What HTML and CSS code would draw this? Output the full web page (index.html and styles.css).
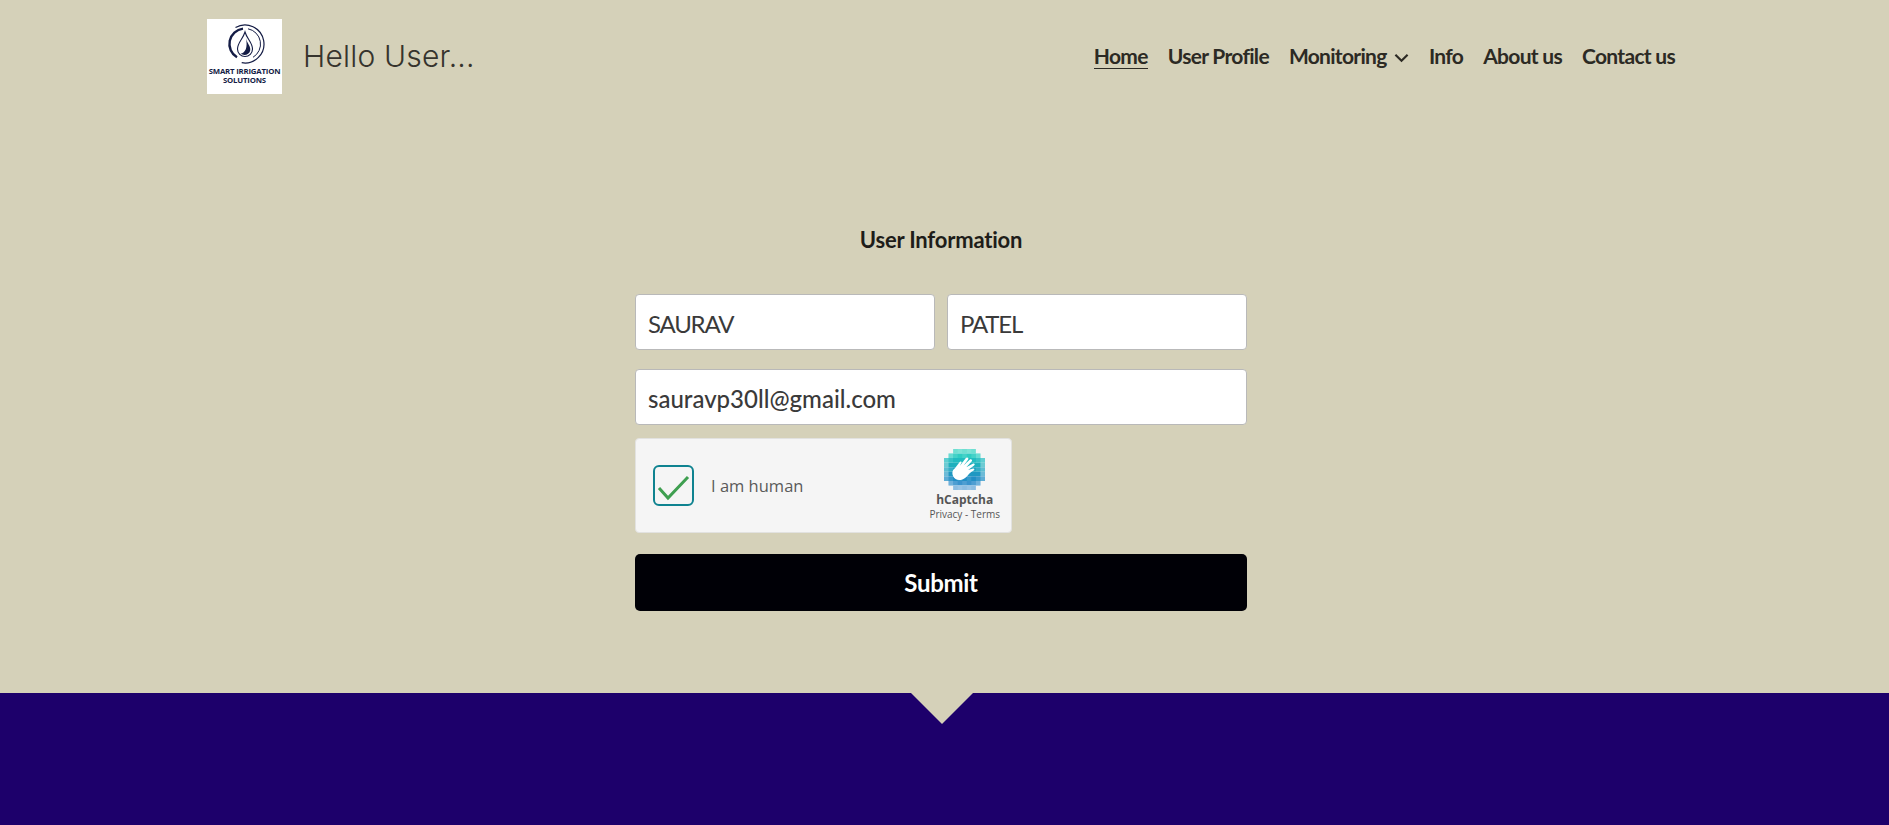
FILE: index.html
```html
<!DOCTYPE html>
<html lang="en">
<head>
    <meta charset="UTF-8">
    <meta name="viewport" content="width=device-width, initial-scale=1.0">
    <title>User Information</title>
    <link rel="stylesheet" href="styles.css">
</head>
<body>
    <header class="site-header">
        <div class="brand">
            <div class="logo">
                <svg class="logo-mark" viewBox="0 0 44 44" width="44" height="44" fill="none">
                    <path d="M12.500 5.500A19 19 0 1 1 18.700 40.700" stroke="#141c45" stroke-width="1.200"/>
                    <path d="M14 35.300A15.500 15.500 0 0 1 20 6.600" stroke="#141c45" stroke-width="2.400"/>
                    <path d="M25 6.800A15.500 15.500 0 0 1 30 35.300" stroke="#141c45" stroke-width="1"/>
                    <path d="M22 10C20 17 14.500 20.500 14.500 27A7.500 7.500 0 0 0 29.500 27C29.500 20.500 24 17 22 10Z" stroke="#141c45" stroke-width="1.100" fill="#fff"/>
                    <path d="M23 16C24 21.500 28 24 27.200 28.500C26.300 33 21 34 17.500 31.800C22.500 30.500 24.800 26 23 16Z" fill="#141c45"/>
                </svg>
                <div class="logo-text">SMART IRRIGATION<br>SOLUTIONS</div>
            </div>
            <h1 class="greeting">Hello User...</h1>
        </div>
        <nav class="main-nav">
            <a href="#" class="active">Home</a>
            <a href="#">User Profile</a>
            <a href="#" class="has-menu">Monitoring
                <svg viewBox="0 0 16 10" width="15" height="10" fill="none"><path d="M1.500 1.500L8 8L14.500 1.500" stroke="#2c2a24" stroke-width="2.300"/></svg>
            </a>
            <a href="#">Info</a>
            <a href="#">About us</a>
            <a href="#">Contact us</a>
        </nav>
    </header>

    <main class="form-section">
        <h2 class="form-title">User Information</h2>
        <form class="user-form">
            <div class="form-row">
                <input type="text" value="SAURAV">
                <input type="text" value="PATEL">
            </div>
            <input type="email" class="email-input" value="sauravp30ll@gmail.com">
            <div class="captcha">
                <div class="captcha-box">
                    <svg viewBox="0 0 41 41" width="41" height="41" fill="none">
                        <rect x="1" y="1" width="39" height="39" rx="5" stroke="#0f8390" stroke-width="2"/>
                        <path d="M6 23L15 33L35 12" stroke="#3f9f50" stroke-width="3"/>
                    </svg>
                    <span class="captcha-label">I am human</span>
                </div>
                <div class="captcha-brand">
                    <svg class="captcha-logo" viewBox="0 0 9 9" width="41" height="41">
                        <path d="M2 0H7V1H2Z" fill="#6fdfd2"/>
                        <path d="M1 1H8V2H1Z" fill="#2fcdc2"/>
                        <path d="M0 2H9V3H0Z" fill="#22bcc0"/>
                        <path d="M0 3H9V4H0Z" fill="#1fb0bd"/>
                        <path d="M0 4H9V5H0Z" fill="#1fa5c0"/>
                        <path d="M0 5H9V6H0Z" fill="#1f98c2"/>
                        <path d="M0 6H9V7H0Z" fill="#218ec5"/>
                        <path d="M1 7H8V8H1Z" fill="#3a93cd"/>
                        <path d="M2 8H7V9H2Z" fill="#8cbde2"/>
                        <path d="M0 2H1V7H0ZM8 2H9V7H8ZM1 1H2V2H1ZM7 1H8V2H7ZM1 7H2V8H1ZM7 7H8V8H7Z" fill="#fff" opacity=".28"/>
                        <path d="M3 0H4V1H3ZM5 0H6V1H5ZM2 1H3V2H2ZM4 1H5V2H4ZM6 1H7V2H6ZM1 2H2V3H1ZM7 2H8V3H7ZM0 3H1V4H0ZM8 3H9V4H8ZM1 4H2V5H1ZM7 4H8V5H7ZM0 5H1V6H0ZM8 5H9V6H8ZM1 6H2V7H1ZM3 6H4V7H3ZM5 6H6V7H5ZM7 6H8V7H7ZM2 7H3V8H2ZM4 7H5V8H4ZM6 7H7V8H6ZM3 8H4V9H3ZM5 8H6V9H5Z" fill="#fff" opacity=".1"/>
                        <path d="M2 6C1.700 5.200 1.800 4.600 2.400 4.200L3.400 2.900C3.600 2.600 4 2.800 3.800 3.100L3.500 3.700L4.800 2C5.100 1.700 5.500 2 5.300 2.300L4.300 3.600L5.700 2.300C6 2.100 6.300 2.400 6.100 2.700L4.900 4L6.400 3.200C6.700 3.100 6.900 3.400 6.600 3.600L5.300 4.600L6.400 4.300C6.700 4.300 6.800 4.600 6.500 4.700C5.700 5 5.300 5.800 4.700 6.300C3.700 7.100 2.400 6.900 2 6Z" fill="#fff"/>
                    </svg>
                    <div class="captcha-name">hCaptcha</div>
                    <div class="captcha-links">Privacy - Terms</div>
                </div>
            </div>
            <button type="submit" class="submit-btn">Submit</button>
        </form>
    </main>

    <footer class="site-footer">
        <svg class="footer-notch" viewBox="0 0 62 31" width="62" height="31"><path d="M0 0H62L31 31Z" fill="#d5d1b9"/></svg>
    </footer>
</body>
</html>
```

FILE: styles.css
```css
* {
    box-sizing: border-box;
}

html, body {
    height: 100%;
}

body {
    margin: 0;
    display: flex;
    flex-direction: column;
    background-color: #d5d1b9;
    color: #2c2a24;
    font-family: Lato, "Liberation Sans", sans-serif;
    overflow: hidden;
}

.site-header {
    display: flex;
    justify-content: space-between;
    align-items: center;
    margin-left: 207px;
    margin-right: 214px;
    padding-top: 19px;
}

.brand {
    display: flex;
    align-items: center;
    gap: 21px;
}

.logo {
    width: 75px;
    height: 75px;
    background-color: #fff;
    display: flex;
    flex-direction: column;
    align-items: center;
    padding-top: 3px;
}

.logo-mark {
    display: block;
}

.logo-text {
    margin-top: 1px;
    font-family: "Open Sans", sans-serif;
    font-size: 7.800px;
    line-height: 9px;
    font-weight: 700;
    letter-spacing: -0.2px;
    text-align: center;
    color: #141c45;
    white-space: nowrap;
}

.greeting {
    margin: 0 0 1px;
    font-family: Inter, sans-serif;
    font-size: 30px;
    font-weight: 300;
    letter-spacing: 0.2px;
    color: #36342d;
}

.main-nav {
    display: flex;
    align-items: center;
    gap: 20px;
    margin-bottom: 2px;
    font-size: 21px;
    line-height: 25px;
    font-weight: 700;
    letter-spacing: -0.7px;
}

.main-nav a {
    color: #2c2a24;
    text-decoration: none;
    white-space: nowrap;
}

.main-nav a.active {
    border-bottom: 1px solid #2c2a24;
}

.has-menu svg {
    margin-left: 3px;
    vertical-align: 1px;
}

.form-section {
    flex: 1;
    width: 612px;
    margin-left: 635px;
    padding-top: 132px;
}

.form-title {
    margin: 0 0 40px;
    font-size: 22px;
    line-height: 28px;
    font-weight: 700;
    letter-spacing: -0.2px;
    text-align: center;
    color: #1e1d19;
}

.user-form {
    display: flex;
    flex-direction: column;
}

.form-row {
    display: flex;
    gap: 12px;
    margin-bottom: 19px;
}

.form-row input {
    flex: 1;
    min-width: 0;
    letter-spacing: -1.2px;
}

input {
    height: 56px;
    padding: 16px 12px 14px;
    background-color: #fff;
    border: 1px solid #b9b9b9;
    border-radius: 4px;
    font-family: Lato, sans-serif;
    font-size: 24px;
    line-height: 22px;
    color: #3a3a3a;
}

.email-input {
    width: 100%;
    font-weight: 500;
}

.captcha {
    display: flex;
    justify-content: space-between;
    align-items: center;
    width: 377px;
    height: 95px;
    margin-top: 13px;
    padding: 0 11px 0 17px;
    background-color: #f5f5f5;
    border: 1px solid #e2e2e0;
    border-radius: 4px;
}

.captcha-box {
    display: flex;
    align-items: center;
    gap: 17px;
}

.captcha-label {
    font-family: "Open Sans", sans-serif;
    font-size: 16.500px;
    color: #5a5a5a;
}

.captcha-brand {
    display: flex;
    flex-direction: column;
    align-items: center;
    margin-bottom: 2px;
    color: #555;
    font-family: "Open Sans", sans-serif;
}

.captcha-logo {
    display: block;
}

.captcha-name {
    margin-top: 2px;
    font-size: 12px;
    line-height: 16px;
    font-weight: 700;
}

.captcha-links {
    font-size: 10px;
    line-height: 13px;
}

.submit-btn {
    height: 57px;
    margin-top: 21px;
    background-color: #000006;
    color: #fff;
    border: none;
    border-radius: 5px;
    font-family: Lato, sans-serif;
    font-size: 24px;
    font-weight: 700;
    letter-spacing: -0.3px;
}

.site-footer {
    position: relative;
    flex: 0 0 132px;
    background-color: #1d006b;
}

.footer-notch {
    position: absolute;
    top: 0;
    left: 911px;
    display: block;
}
```
